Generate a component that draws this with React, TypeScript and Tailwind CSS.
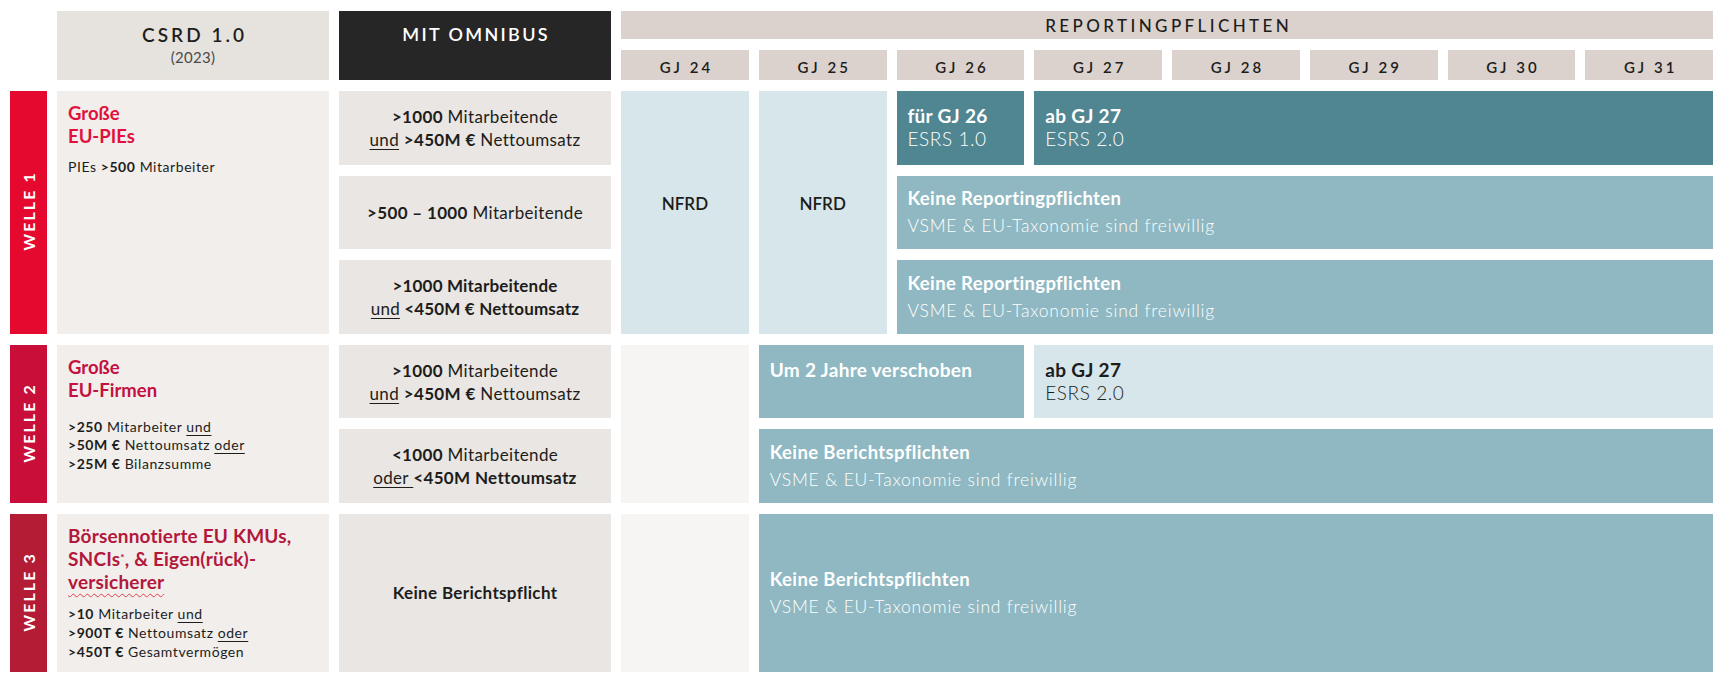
import React from 'react';

const dark = 'text-[#1d1d1b]';

interface InfoProps {
  className: string;
  title: string;
  sub?: string;
  top?: boolean;
}

// teal block with a bold title and an optional light second line
const Info: React.FC<InfoProps> = ({ className, title, sub, top }) => (
  <div className={`flex flex-col px-[11px] ${top ? 'justify-start pt-[13px]' : 'justify-center'} ${className}`}>
    <div
      className={`font-bold ${top ? 'text-[19px] leading-[23px] tracking-[0.015em]' : 'text-[18.5px] leading-[27px] tracking-[0.02em]'}`}
    >
      {title}
    </div>
    {sub && (
      <div
        className={`font-light ${top ? 'text-[19px] leading-[23px] tracking-[0.03em]' : 'text-[17.5px] leading-[27px] tracking-[0.045em]'}`}
      >
        {sub}
      </div>
    )}
  </div>
);

const U: React.FC<{ children: React.ReactNode }> = ({ children }) => (
  <span className="underline decoration-1 underline-offset-[3px]">{children}</span>
);

const years = [
  { label: 'GJ 24', pos: 'col-start-4' },
  { label: 'GJ 25', pos: 'col-start-5' },
  { label: 'GJ 26', pos: 'col-start-6' },
  { label: 'GJ 27', pos: 'col-start-7' },
  { label: 'GJ 28', pos: 'col-start-8' },
  { label: 'GJ 29', pos: 'col-start-9' },
  { label: 'GJ 30', pos: 'col-start-10' },
  { label: 'GJ 31', pos: 'col-start-11' },
];

export default function App() {
  return (
    <div className="w-[1720px] h-[680px] bg-white pl-[10px] pr-[7px] pt-[11px] font-['Lato','Open_Sans',sans-serif] text-[#1d1d1b]">
      <div className="grid grid-cols-[37px_272px_272px_repeat(8,minmax(0,1fr))] grid-rows-[28px_30px_repeat(7,73.6px)] gap-x-[10px] gap-y-[11px]">
        {/* Header */}
        <div className="col-start-2 row-start-1 row-span-2 bg-[#e6e3df] flex flex-col items-center pt-[12px]">
          <div className="text-[19px] leading-[24px] font-semibold tracking-[0.16em] pl-[0.16em]">CSRD 1.0</div>
          <div className="text-[15px] leading-[20px] font-normal text-[#4a4a4a] tracking-[0.02em]">(2023)</div>
        </div>
        <div className="col-start-3 row-start-1 row-span-2 bg-[#262626] text-white flex justify-center pt-[11px]">
          <div className="text-[18px] leading-[24px] font-semibold tracking-[0.13em] pl-[0.13em]">MIT OMNIBUS</div>
        </div>
        <div className="col-start-4 col-span-8 row-start-1 bg-[#dbd2cd] flex items-center justify-center pt-[2px]">
          <div className="text-[17px] leading-[20px] font-medium tracking-[0.2em] pl-[0.2em]">REPORTINGPFLICHTEN</div>
        </div>
        {years.map((y) => (
          <div key={y.label} className={`${y.pos} row-start-2 bg-[#dbd2cd] flex items-center justify-center pt-[3px]`}>
            <span className="text-[15px] leading-[18px] font-semibold tracking-[0.2em] pl-[0.2em]">{y.label}</span>
          </div>
        ))}

        {/* Welle 1 */}
        <div className="col-start-1 row-start-3 row-span-3 bg-[#e5082f] flex items-center justify-center">
          <span className="-rotate-90 whitespace-nowrap text-white text-[16px] font-bold tracking-[0.13em] pl-[0.13em]">WELLE 1</span>
        </div>
        <div className="col-start-2 row-start-3 row-span-3 bg-[#f1eeec] px-[11px] pt-[11px]">
          <div className="text-[18.5px] leading-[23px] font-bold text-[#e0123c]">
            Große
            <br />
            EU-PIEs
          </div>
          <div className="mt-[10px] text-[14px] leading-[18.5px] font-normal tracking-[0.04em]">
            PIEs <b className="font-bold">&gt;500</b> Mitarbeiter
          </div>
        </div>
        <div className="col-start-3 row-start-3 bg-[#e9e6e3] flex flex-col items-center justify-center text-[17px] leading-[23px] font-normal tracking-[0.02em]">
          <div><b className="font-bold">&gt;1000</b> Mitarbeitende</div>
          <div><U>und</U> <b className="font-bold">&gt;450M €</b> Nettoumsatz</div>
        </div>
        <div className="col-start-3 row-start-4 bg-[#e9e6e3] flex items-center justify-center text-[17px] leading-[23px] font-normal tracking-[0.02em]">
          <div><b className="font-bold">&gt;500 – 1000</b> Mitarbeitende</div>
        </div>
        <div className="col-start-3 row-start-5 bg-[#e9e6e3] flex flex-col items-center justify-center text-[17px] leading-[23px] font-bold tracking-[0.01em]">
          <div>&gt;1000 Mitarbeitende</div>
          <div><span className="font-normal"><U>und</U></span> &lt;450M € Nettoumsatz</div>
        </div>
        <div className="col-start-4 row-start-3 row-span-3 bg-[#d6e6eb] flex items-center justify-center pb-[18px]">
          <span className="text-[17px] font-semibold">NFRD</span>
        </div>
        <div className="col-start-5 row-start-3 row-span-3 bg-[#d6e6eb] flex items-center justify-center pb-[18px]">
          <span className="text-[17px] font-semibold">NFRD</span>
        </div>
        <Info className="col-start-6 row-start-3 bg-[#4f8692] text-white" title="für GJ 26" sub="ESRS 1.0" top />
        <Info className="col-start-7 col-span-5 row-start-3 bg-[#4f8692] text-white" title="ab GJ 27" sub="ESRS 2.0" top />
        <Info
          className="col-start-6 col-span-6 row-start-4 bg-[#8fb8c2] text-white"
          title="Keine Reportingpflichten"
          sub="VSME & EU-Taxonomie sind freiwillig"
        />
        <Info
          className="col-start-6 col-span-6 row-start-5 bg-[#8fb8c2] text-white"
          title="Keine Reportingpflichten"
          sub="VSME & EU-Taxonomie sind freiwillig"
        />

        {/* Welle 2 */}
        <div className="col-start-1 row-start-6 row-span-2 bg-[#c90e3a] flex items-center justify-center">
          <span className="-rotate-90 whitespace-nowrap text-white text-[16px] font-bold tracking-[0.13em] pl-[0.13em]">WELLE 2</span>
        </div>
        <div className="col-start-2 row-start-6 row-span-2 bg-[#f1eeec] px-[11px] pt-[11px]">
          <div className="text-[18.5px] leading-[23px] font-bold text-[#c4113f]">
            Große
            <br />
            EU-Firmen
          </div>
          <div className="mt-[16px] text-[14px] leading-[18.5px] font-normal tracking-[0.04em]">
            <div><b className="font-bold">&gt;250</b> Mitarbeiter <U>und</U></div>
            <div><b className="font-bold">&gt;50M €</b> Nettoumsatz <U>oder</U></div>
            <div><b className="font-bold">&gt;25M €</b> Bilanzsumme</div>
          </div>
        </div>
        <div className="col-start-3 row-start-6 bg-[#e9e6e3] flex flex-col items-center justify-center text-[17px] leading-[23px] font-normal tracking-[0.02em]">
          <div><b className="font-bold">&gt;1000</b> Mitarbeitende</div>
          <div><U>und</U> <b className="font-bold">&gt;450M €</b> Nettoumsatz</div>
        </div>
        <div className="col-start-3 row-start-7 bg-[#e9e6e3] flex flex-col items-center justify-center text-[17px] leading-[23px] font-normal tracking-[0.02em]">
          <div><b className="font-bold">&lt;1000</b> Mitarbeitende</div>
          <div><U>oder </U><b className="font-bold">&lt;450M Nettoumsatz</b></div>
        </div>
        <div className="col-start-4 row-start-6 row-span-2 bg-[#f6f5f3]" />
        <Info className="col-start-5 col-span-2 row-start-6 bg-[#8fb8c2] text-white" title="Um 2 Jahre verschoben" top />
        <Info className={`col-start-7 col-span-5 row-start-6 bg-[#d6e6eb] ${dark}`} title="ab GJ 27" sub="ESRS 2.0" top />
        <Info
          className="col-start-5 col-span-7 row-start-7 bg-[#8fb8c2] text-white"
          title="Keine Berichtspflichten"
          sub="VSME & EU-Taxonomie sind freiwillig"
        />

        {/* Welle 3 */}
        <div className="col-start-1 row-start-8 row-span-2 bg-[#b41b35] flex items-center justify-center">
          <span className="-rotate-90 whitespace-nowrap text-white text-[16px] font-bold tracking-[0.13em] pl-[0.13em]">WELLE 3</span>
        </div>
        <div className="col-start-2 row-start-8 row-span-2 bg-[#f1eeec] px-[11px] pt-[10px]">
          <div className="text-[19px] leading-[23px] font-bold text-[#b3183b] tracking-[0.01em]">
            Börsennotierte EU KMUs,
            <br />
            SNCIs<sup className="text-[10px]">*</sup>, &amp; Eigen(rück)-
            <br />
            <span className="underline decoration-wavy decoration-[#e0404a] decoration-1 underline-offset-[4px]">versicherer</span>
          </div>
          <div className="mt-[11px] text-[14px] leading-[19px] font-normal tracking-[0.04em]">
            <div><b className="font-bold">&gt;10</b> Mitarbeiter <U>und</U></div>
            <div><b className="font-bold">&gt;900T €</b> Nettoumsatz <U>oder</U></div>
            <div><b className="font-bold">&gt;450T €</b> Gesamtvermögen</div>
          </div>
        </div>
        <div className="col-start-3 row-start-8 row-span-2 bg-[#e9e6e3] flex items-center justify-center">
          <span className="text-[17px] font-bold tracking-[0.02em]">Keine Berichtspflicht</span>
        </div>
        <div className="col-start-4 row-start-8 row-span-2 bg-[#f6f5f3]" />
        <Info
          className="col-start-5 col-span-7 row-start-8 row-span-2 bg-[#8fb8c2] text-white"
          title="Keine Berichtspflichten"
          sub="VSME & EU-Taxonomie sind freiwillig"
        />
      </div>
    </div>
  );
}
